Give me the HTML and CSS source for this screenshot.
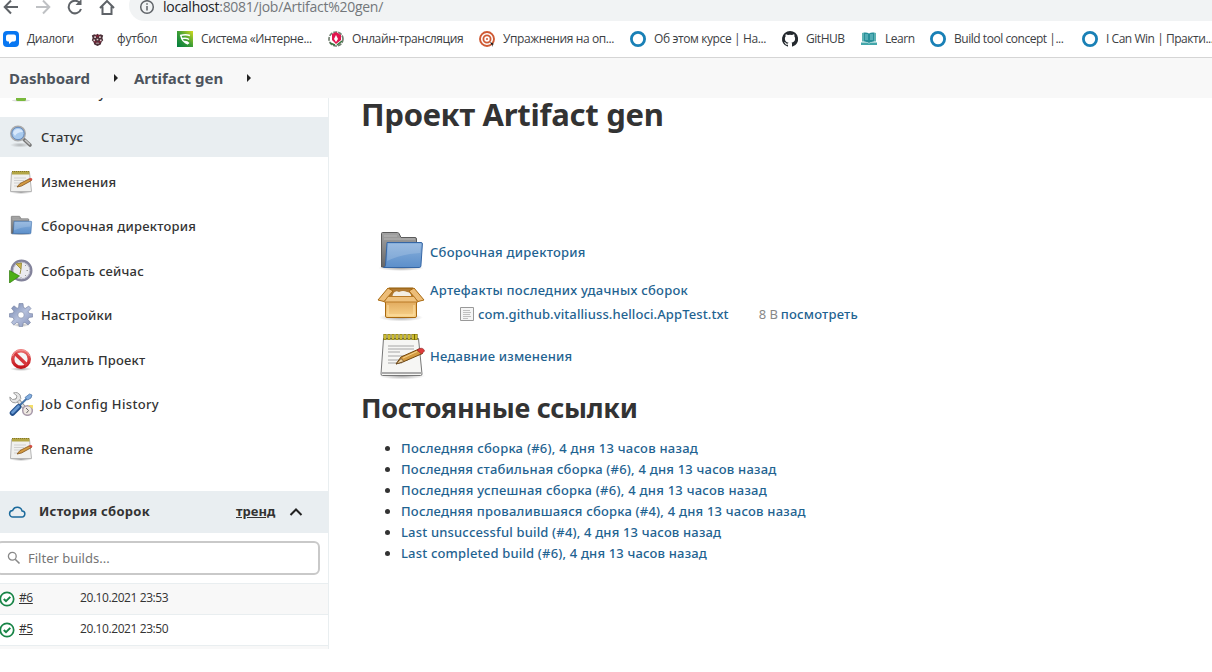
FILE: index.html
```
<!DOCTYPE html>
<html lang="ru">
<head>
<meta charset="utf-8">
<title>Artifact gen [Jenkins]</title>
<link rel="stylesheet" href="styles.css">
</head>
<body>
<svg class="defs" width="0" height="0" aria-hidden="true">
  <defs>
    <linearGradient id="blue" x1="0" y1="0" x2="0" y2="1"><stop offset="0" stop-color="#89b0dc"/><stop offset="1" stop-color="#5c8fca"/></linearGradient>
    <linearGradient id="gray" x1="0" y1="0" x2="0" y2="1"><stop offset="0" stop-color="#a3a3a3"/><stop offset="1" stop-color="#666"/></linearGradient>
    <linearGradient id="box" x1="0" y1="0" x2="0" y2="1"><stop offset="0" stop-color="#dda255"/><stop offset="1" stop-color="#f8d38b"/></linearGradient>
    <linearGradient id="gear" x1="0" y1="0" x2="1" y2="1"><stop offset="0" stop-color="#7284ae"/><stop offset=".5" stop-color="#b4bfdb"/><stop offset="1" stop-color="#8390b9"/></linearGradient>
    <linearGradient id="red" x1="0" y1="0" x2="0" y2="1"><stop offset="0" stop-color="#e96a6a"/><stop offset="1" stop-color="#c4141b"/></linearGradient>
    <linearGradient id="green" x1="0" y1="1" x2="1" y2="0"><stop offset="0" stop-color="#007c3f"/><stop offset=".5" stop-color="#3c9d35"/><stop offset="1" stop-color="#d5dc1f"/></linearGradient>
    <radialGradient id="shade"><stop offset="0" stop-color="#000" stop-opacity=".35"/><stop offset="1" stop-color="#000" stop-opacity="0"/></radialGradient>
    <symbol id="folder" viewBox="0 0 48 48">
      <ellipse cx="24" cy="40" rx="23" ry="3" fill="url(#shade)"/>
      <path d="M4.500 39V5.500q0-1 1-1h15q1 0 1.500 1l2 4h14q1.500 0 1.500 1.500v28z" fill="url(#gray)" stroke="#5b5b5b"/>
      <path d="M7 8h13M7 11h31" stroke="#c2c2c2" stroke-width=".7"/>
      <path d="M10 14.500h34q1.500 0 1.400 1.500l-1.500 22q-.2 1.500-1.700 1.500H6.500q1.800-.5 2-2z" fill="url(#blue)" stroke="#3566a5"/>
      <path d="M11 16h33l-.7 9Q24 26 10 33z" fill="#fff" opacity=".16"/>
    </symbol>
    <symbol id="package" viewBox="0 0 48 48">
      <ellipse cx="24" cy="39.500" rx="22" ry="4" fill="url(#shade)"/>
      <path d="M12 10h24l4 12H8z" fill="#b07a33" stroke="#8f5902"/>
      <path d="M16 16q2-4 6-2 4-2 8 0 3 0 4 3v3H15z" fill="#f3eee3"/>
      <path d="M8.500 20h31v18q0 1.500-1.500 1.500H10q-1.500 0-1.500-1.500z" fill="url(#box)" stroke="#a9690f"/>
      <path d="M11 10L1 22l6 1.500L16 13zM37 10l10 12-6 1.500L32 13z" fill="#edbd78" stroke="#a9690f"/>
      <path d="M11 18.500h26l4 5.500H7z" fill="#efc27e" stroke="#b97a27"/>
      <path d="M11 27v10h26V27" fill="none" stroke="#ffe1a4"/>
    </symbol>
    <symbol id="notepad" viewBox="0 0 48 48">
      <ellipse cx="25" cy="44" rx="23" ry="3.500" fill="url(#shade)"/>
      <path d="M6.500 6.500h35l3.500 35.500q0 1.500-1.500 1.500h-38Q4 43.500 4 42z" fill="#f6f6f4" stroke="#777"/>
      <path d="M4.500 41h40" stroke="#aaa" stroke-width="2"/>
      <path d="M11 14h26M11 17h26M11 20h12M11 24h22M11 28h20M11 31h14" stroke="#a6a6a6"/>
      <path d="M8 2v6M12 2v6M16 2v6M20 2v6M24 2v6M28 2v6M32 2v6M36 2v6M39 2v6" stroke="#756800" stroke-width="3.200"/>
      <path d="M8 2.500v5M12 2.500v5M16 2.500v5M20 2.500v5M24 2.500v5M28 2.500v5M32 2.500v5M36 2.500v5M39 2.500v5" stroke="#e2d03c" stroke-width="1.600"/>
      <path d="M19 32l5-7 18-8 3.500 4.500-18.500 8z" fill="#d49c42" stroke="#71460d"/>
      <path d="M19 32l5-5.500 3 3z" fill="#efd3a0" stroke="#5b3a13" stroke-width=".7"/>
      <path d="M40 18l2.500-1.500q4-1 5 2.500l-3 3z" fill="#e03b3b" stroke="#902222" stroke-width=".7"/>
      <path d="M26 26l14-6.500" stroke="#f7d38e"/>
    </symbol>
    <symbol id="note-small" viewBox="0 0 24 24">
      <ellipse cx="12" cy="22.500" rx="11.500" ry="1.500" fill="url(#shade)"/>
      <path d="M2.500 2.500h18l2 19H1.500z" fill="#f0f0ee" stroke="#b5b5b5"/>
      <path d="M3 1h17.500v3.500H3z" fill="#b3a646"/><path d="M3 1.500h17" stroke="#83762a" stroke-dasharray="1 1"/>
      <path d="M5 8h12M5 10.500h10M5 13h7M5 16h5" stroke="#d0d0d0"/>
      <path d="M8 17l3-3.500 9-4.500 2.500 1.500-10 5.500z" fill="#d49b42" stroke="#805118" stroke-width=".8"/>
      <path d="M19.500 8.500q3-1.500 4 .8l-1.500 1.700z" fill="#d44b42"/>
    </symbol>
    <symbol id="search-big" viewBox="0 0 24 24">
      <ellipse cx="11" cy="20" rx="10" ry="2.500" fill="url(#shade)" opacity=".7"/>
      <path d="M15 14.500l6 5.500" stroke="#777" stroke-width="3.600" stroke-linecap="round"/><path d="M16 15l5 4.500" stroke="#c8c8c8" stroke-width="1.600"/>
      <circle cx="9" cy="8.500" r="7" fill="#a8caee" stroke="#aaa" stroke-width="2"/><circle cx="9" cy="8.500" r="6.200" fill="none" stroke="#668dc2"/>
      <path d="M4 8q1-4 5-4 4 0 5 3-6 0-8 4z" fill="#e7f2ff" opacity=".75"/>
    </symbol>
    <symbol id="clock" viewBox="0 0 24 24">
      <circle cx="12.500" cy="11.500" r="9.800" fill="#ebebf0" stroke="#83839b" stroke-width="2.400"/>
      <circle cx="12.500" cy="11.500" r="8.300" fill="none" stroke="#b9b9ca"/>
      <path d="M12 3.500v1.500M19 11.500h-1.500M12 19v-1M17 6l-1 1M17 17l-1-1" stroke="#999"/>
      <path d="M7 5l5 5 .5-6zM12 10l-1 5" fill="#d2b54b" stroke="#9d9344"/>
      <path d="M.5 11.500l10 5.500L.5 24z" fill="#4caf19" stroke="#317c0b" stroke-width=".7"/>
    </symbol>
    <symbol id="settings" viewBox="0 0 24 24">
      <ellipse cx="12" cy="22" rx="9" ry="2" fill="url(#shade)"/>
      <path fill-rule="evenodd" d="M10 .5h4l.5 4 2 .8L19.700 3 22 5.500 19.300 8.500l.7 1.900 3.700.4v3.200l-3.900.5-.8 2 2.500 3.100-2.500 2.300-3.100-2.500-1.900.8-.5 3.600h-3.300l-.5-3.600-1.900-.8L4.800 22l-2.400-2.500 2.500-3-.8-2-3.800-.5v-3.300l3.800-.6.8-1.900L2.500 5.200 5 2.800l3.100 2.500 1.500-.8zM12 8.800a3.200 3.200 0 1 0 0 6.400 3.200 3.200 0 0 0 0-6.400z" fill="url(#gear)" stroke="#7480a0" stroke-width=".6"/>
    </symbol>
    <symbol id="delete" viewBox="0 0 24 24">
      <ellipse cx="12" cy="21" rx="11" ry="2" fill="url(#shade)"/>
      <circle cx="12" cy="11" r="8.300" fill="#f5f5f5" stroke="url(#red)" stroke-width="3.400"/>
      <path d="M6 5.500L18 17" stroke="#d6353a" stroke-width="3.300"/>
      <path d="M3.500 8Q6 2 12 2t8.500 6" fill="none" stroke="#f39c9c"/>
    </symbol>
    <symbol id="tools" viewBox="0 0 24 24">
      <path d="M7 6l12 14" stroke="#888" stroke-width="4"/><path d="M7 6l12 14" stroke="#e1e1e1" stroke-width="2.500"/>
      <path d="M4.500 1L8 4 7 7 3.500 7.500.8 5q-.3 4 3 5.500 3 1 5-.8l3-3Q12 2 8.500.8 6.500 0 4.500 1z" fill="#e6e6e6" stroke="#8c8c8c" stroke-width=".8"/>
      <path d="M9 15L20 4.500" stroke="#4977aa" stroke-width="2"/><path d="M16 5.500L20.500 2l2.500 1-1 3-3.500 2z" fill="#83aee0" stroke="#456d9f" stroke-width=".7"/>
      <path d="M3.500 21l6-6" stroke="#214e8b" stroke-width="5.500" stroke-linecap="round"/><path d="M3.500 20.500l6-6" stroke="#6899d2" stroke-width="2.800" stroke-linecap="round"/>
      <circle cx="18.500" cy="18.500" r="4.800" fill="#efe8e2" stroke="#a79aaa" stroke-width="1.500"/><path d="M19 13h5v4z" fill="#f4df68"/><path d="M17 16l2.500 2.500-2 2.500" fill="none" stroke="#666"/>
    </symbol>
    <symbol id="ok" viewBox="0 0 16 16"><circle cx="8" cy="8" r="6.700" fill="#fff" stroke="#178446" stroke-width="1.700"/><path d="M4.800 8l2.200 2.200 4.300-4.300" fill="none" stroke="#178446" stroke-width="2"/></symbol>
    <symbol id="ring" viewBox="0 0 16 16"><circle cx="8" cy="8" r="6.600" fill="#fff" stroke="#1980b6" stroke-width="2.800"/></symbol>
  </defs>
</svg>

<div class="toolbar">
  <svg class="nav" viewBox="0 0 120 21" fill="none" stroke="#5f6368" stroke-width="2">
    <path d="M18 7H5.500M11 .5L4.700 7l6.300 6.500"/>
    <path d="M36 7h12.500M43 .5L49.300 7 43 13.500" stroke="#bfc1c4"/>
    <path d="M80 3.200A6.300 6.300 0 1 0 81 9"/><path d="M81.500-1v6h-6z" fill="#5f6368" stroke="none"/>
    <path d="M100 8l7-7 7 7M102.500 6.500V14h9V6.500"/>
  </svg>
  <div class="address">
    <svg class="info" viewBox="0 0 16 16" fill="none" stroke="#5f6368" stroke-width="1.500"><circle cx="8" cy="8" r="6.300"/><path d="M8 7v4.500M8 4.200v1.600"/></svg>
    <span class="url"><b>localhost</b>:8081/job/Artifact%20gen/</span>
  </div>
</div>

<nav class="bookmarks">
  <a><svg viewBox="0 0 16 16"><rect width="16" height="16" rx="4" fill="#0877f2"/><path d="M5 3.500h6q2 0 2 2v3q0 2-2 2H9l-3 2.500v-2.500H5q-2 0-2-2v-3q0-2 2-2z" fill="#fff"/></svg><span>Диалоги</span></a>
  <a><svg class="crest" viewBox="0 0 16 16"><path d="M1 3l3-1.500 2 1L8 1l2 1.500 2-1L15 3l-1 3 1 3-2 2-1 3-4 2-4-2-1-3-2-2 1-3z" fill="#4a3038"/><path d="M4 4h2v2H4zM10 4h2v2h-2zM7 7h2v2H7zM3 8h2v2H3zM11 8h2v2h-2zM6 12h4v1H6z" fill="#e4cccf"/><path d="M6 2l2 3 2-3M4 11h3M9 11h3" stroke="#a51632" fill="none"/></svg><span class="wide">футбол</span></a>
  <a><svg viewBox="0 0 16 16"><path d="M0 0h16v16H0z" fill="url(#green)"/><path d="M3 4.500q6-1.500 10 0M5 7.500q5-1 7 1M7 10.500q3-.5 5 2M4 5q1 6 7 8" fill="none" stroke="#fff" stroke-width="1.500"/></svg><span>Система «Интерне...</span></a>
  <a><svg viewBox="0 0 16 16"><circle cx="8" cy="8" r="7" fill="#fff" stroke="#738072" stroke-width="1.700" stroke-dasharray="4 1"/><path d="M8 1l5 3v5l-5 4-4-4V3z" fill="#e1154f"/><path d="M8 4l2 4-2 3-2-3z" fill="#fff"/><path d="M2 12l5 2M9 14l5-4" stroke="#37753d" stroke-width="1.500"/></svg><span>Онлайн-трансляция</span></a>
  <a><svg viewBox="0 0 16 16"><g fill="none" stroke="#cf5a34"><circle cx="8" cy="8" r="7" stroke-width="1.900"/><circle cx="8" cy="8" r="3.600" stroke-width="1.800"/></g><circle cx="8" cy="8" r="1" fill="#cf5a34"/><path d="M11 11l4 2-1.500.7.5 2.300z" fill="#111"/></svg><span>Упражнения на оп...</span></a>
  <a><svg><use href="#ring"/></svg><span>Об этом курсе | На...</span></a>
  <a><svg viewBox="0 0 16 16"><path fill="#24292e" d="M8 0a8 8 0 0 0-2.500 15.600c.4.100.5-.2.500-.4v-1.500c-2.200.5-2.700-1-2.700-1-.4-.9-.9-1.200-.9-1.200-.7-.5.100-.5.100-.5.800.1 1.200.8 1.200.8.700 1.200 1.900.9 2.300.7.100-.5.300-.9.500-1.100-1.800-.2-3.600-.9-3.600-4 0-.9.300-1.600.8-2.100-.1-.2-.4-1 .1-2.100 0 0 .7-.2 2.200.8a7.600 7.600 0 0 1 4 0c1.500-1 2.200-.8 2.200-.8.400 1.100.2 1.900.1 2.100.5.600.8 1.300.8 2.100 0 3.100-1.900 3.800-3.600 4 .3.200.5.700.5 1.500v2.300c0 .2.100.5.600.4A8 8 0 0 0 8 0z"/></svg><span class="tight">GitHUB</span></a>
  <a><svg viewBox="0 0 16 16"><path d="M1 2l2-.5v9H1zM15 2l-2-.5v9h2z" fill="#5fb3b4"/><path d="M3 1.500q3-.5 5 1 2-1.500 5-1v9q-3 0-5 1.500-2-1.500-5-1.500z" fill="#278f99"/><path d="M4 4h3M4 6h3M4 8h3M9 4h3M9 6h3M9 8h3" stroke="#80cbd0"/><path d="M0 11.500h6l2 1 2-1h6V14H0z" fill="#43a6aa"/></svg><span class="tight">Learn</span></a>
  <a><svg><use href="#ring"/></svg><span class="tight">Build tool concept |...</span></a>
  <a><svg><use href="#ring"/></svg><span class="tight">I Can Win | Практи...</span></a>
</nav>

<div class="crumbs"><a>Dashboard</a><i></i><a>Artifact gen</a><i></i></div>

<div class="page">
  <aside class="side">
    <div class="cut"><svg viewBox="0 0 24 4"><ellipse cx="12" cy="2.500" rx="9" ry="1" fill="#ddd"/><path d="M7 0h10v1.500q0 1.500-1.500 1.500h-7Q7 3 7 1.500z" fill="#79b93c"/></svg><span>На главную</span></div>
    <ul class="tasks">
      <li class="active"><svg><use href="#search-big"/></svg><span>Статус</span></li>
      <li><svg><use href="#note-small"/></svg><span>Изменения</span></li>
      <li><svg><use href="#folder"/></svg><span>Сборочная директория</span></li>
      <li><svg><use href="#clock"/></svg><span>Собрать сейчас</span></li>
      <li><svg><use href="#settings"/></svg><span>Настройки</span></li>
      <li><svg><use href="#delete"/></svg><span>Удалить Проект</span></li>
      <li><svg><use href="#tools"/></svg><span class="latin">Job Config History</span></li>
      <li><svg><use href="#note-small"/></svg><span>Rename</span></li>
    </ul>
    <div class="history-head">
      <svg class="cloud" viewBox="0 0 18 14" fill="none" stroke="#1b6a9c" stroke-width="1.500"><path d="M5 12h8.500a3 3 0 0 0 .6-6A5 5 0 0 0 4.600 5.600 3.200 3.200 0 0 0 5 12z"/></svg>
      <b>История сборок</b><a>тренд</a>
      <svg class="chev" viewBox="0 0 14 10" fill="none" stroke="#222" stroke-width="2"><path d="M1.500 8L7 2.500 12.500 8"/></svg>
    </div>
    <div class="filter"><svg viewBox="0 0 14 14" fill="none" stroke="#888" stroke-width="1.300"><circle cx="5.300" cy="5.300" r="3.900"/><path d="M8.200 8.200l4.300 4.300" stroke-width="1.600"/></svg><span>Filter builds...</span></div>
    <div class="build odd"><svg><use href="#ok"/></svg><a>#6</a><time>20.10.2021 23:53</time></div>
    <div class="build"><svg><use href="#ok"/></svg><a>#5</a><time>20.10.2021 23:50</time></div>
    <div class="last"></div>
  </aside>
  <main class="main">
    <h1>Проект Artifact gen</h1>
    <div class="entry"><svg><use href="#folder"/></svg><a class="wider">Сборочная директория</a></div>
    <div class="entry package"><svg><use href="#package"/></svg>
      <div class="artifacts"><a class="wider">Артефакты последних удачных сборок</a>
        <div class="file"><svg viewBox="0 0 14 16"><path d="M.5 1.500h13v13H.5z" fill="#f5f5f5" stroke="#999"/><path d="M3 4.500h7M3 6.500h8M3 8.500h7M3 10.500h8M3 12.500h5" stroke="#c0c0c0"/></svg><a class="name">com.github.vitalliuss.helloci.AppTest.txt</a><span class="size">8 B</span><a>посмотреть</a></div>
      </div>
    </div>
    <div class="entry changes"><svg><use href="#notepad"/></svg><a>Недавние изменения</a></div>
    <h2>Постоянные ссылки</h2>
    <ul class="links">
      <li><a class="wider">Последняя сборка (#6), 4 дня 13 часов назад</a></li>
      <li><a>Последняя стабильная сборка (#6), 4 дня 13 часов назад</a></li>
      <li><a class="wider">Последняя успешная сборка (#6), 4 дня 13 часов назад</a></li>
      <li><a>Последняя провалившаяся сборка (#4), 4 дня 13 часов назад</a></li>
      <li><a class="latin">Last unsuccessful build (#4), 4 дня 13 часов назад</a></li>
      <li><a class="latin">Last completed build (#6), 4 дня 13 часов назад</a></li>
    </ul>
  </main>
</div>
</body>
</html>
```
FILE: styles.css
```
* { box-sizing: border-box; }
body { margin: 0; width: 1212px; height: 672px; overflow: hidden; background: #fff; color: #333; font: 13px/20px "Noto Sans", "Open Sans", sans-serif; display: flex; flex-direction: column; }
svg { flex: none; overflow: visible; }
.defs { position: absolute; }
ul { list-style: none; margin: 0; padding: 0; }
span, a, time, h1, h2 { white-space: nowrap; }
.toolbar { flex: none; height: 21px; display: flex; overflow: hidden; }
.nav { width: 120px; height: 21px; }
.address { flex: 1; margin-left: 9px; height: 31px; margin-top: -10px; background: #f1f3f4; border-radius: 16px 0 0 16px; display: flex; align-items: center; padding: 3px 0 0 10px; }
.info { width: 16px; height: 16px; }
.url { margin-left: 8px; color: #73777b; font: 14px/18px "Open Sans", "Noto Sans", sans-serif; letter-spacing: -.27px; }
.url b { font-weight: 400; color: #202124; }
.bookmarks { flex: none; height: 37px; border-bottom: 1px solid #d5d5d5; padding-left: 3px; display: grid; grid-template-columns: 90px 84px 151px 151px 151px 152px 79px 69px 152px 130px; align-items: center; color: #3c4043; font: 12px/18px "Open Sans", "Noto Sans", sans-serif; letter-spacing: -.39px; overflow: hidden; }
.bookmarks a { display: flex; align-items: center; }
.bookmarks svg { width: 16px; height: 16px; margin-right: 8px; }
.bookmarks .crest { width: 13px; height: 13px; margin: 0 13px 0 -2px; }
.bookmarks .tight { letter-spacing: -.46px; }
.bookmarks .wide { letter-spacing: -.2px; }
.crumbs { flex: none; height: 40px; background: #f8f8f8; display: flex; align-items: center; padding-left: 9px; font-size: 15px; font-weight: 700; color: #4d545d; }
.crumbs i { border: 4px solid transparent; border-left-color: #222; border-right: 0; margin: 0 16px 0 24px; }
.page { flex: 1; display: flex; min-height: 0; }
.side { width: 329px; height: 551px; border-right: 1px solid #e9eef0; overflow: hidden; }
.cut { height: 19px; display: flex; overflow: hidden; padding-left: 9px; }
.cut svg { width: 24px; height: 4px; margin-right: 8px; }
.cut span { margin-top: -15px; font-weight: 500; letter-spacing: .1px; }
.tasks { display: grid; grid-auto-rows: 40px; row-gap: 4.570px; letter-spacing: .22px; }
.tasks li { display: flex; align-items: center; padding-left: 9px; font-weight: 500; }
.tasks .active { background: #e9eef1; }
.tasks svg { width: 24px; height: 24px; margin-right: 8px; }
.tasks .latin { letter-spacing: .34px; }
.history-head { height: 42px; margin-top: 22px; background: #e9eef1; display: flex; align-items: center; padding-left: 8px; }
.history-head b { margin: -2px 0 0 13px; width: 197px; letter-spacing: .27px; }
.history-head a { margin-top: -2px; font-weight: 700; text-decoration: underline; width: 40px; }
.cloud { width: 18px; height: 14px; }
.chev { width: 14px; height: 10px; margin-left: 13px; }
.filter { height: 34px; width: 324px; margin: 8px 0 8px -4px; border: 2px solid #c9c9c9; border-radius: 6px; display: flex; align-items: center; padding-left: 9px; color: #757575; }
.filter svg { width: 14px; height: 14px; margin-right: 7px; }
.build { height: 31px; border-top: 1px solid #e9eef0; display: flex; align-items: center; font: 12px/18px "Open Sans", "Noto Sans", sans-serif; letter-spacing: -.42px; color: #333; padding-bottom: 2px; }
.odd, .last { background: #f8f8f8; }
.last { height: 4px; border-top: 1px solid #e9eef0; }
.build svg { width: 16px; height: 16px; margin: 2px 4px 0 -1px; }
.build a { text-decoration: underline; width: 61px; }
.main { padding-left: 32px; flex: 1; }
h1 { margin: 0; font-size: 31px; line-height: 32px; height: 130px; letter-spacing: -.27px; }
.entry { display: flex; align-items: center; padding-left: 16px; height: 48px; }
.entry svg { width: 48px; height: 48px; margin-right: 5px; }
.main a { color: #1f6391; font-weight: 500; letter-spacing: .21px; }
.main .wider { letter-spacing: .25px; }
.main .latin { letter-spacing: .17px; }
.main .name { letter-spacing: .1px; }
.package { height: 52px; }
.artifacts { padding-top: 2px; }
.artifacts > a { display: block; height: 22px; }
.file { display: flex; align-items: center; padding-left: 30px; height: 24px; }
.file svg { width: 14px; height: 16px; margin-right: 4px; }
.size { color: #888; margin-left: 30px; width: 22px; }
.changes { height: 56px; }
h2 { margin: 4px 0 0; font-size: 27px; line-height: 40px; height: 50px; letter-spacing: -.3px; }
.links { padding-left: 40px; list-style: disc; }
.links li { height: 21px; line-height: 21px; }
```
